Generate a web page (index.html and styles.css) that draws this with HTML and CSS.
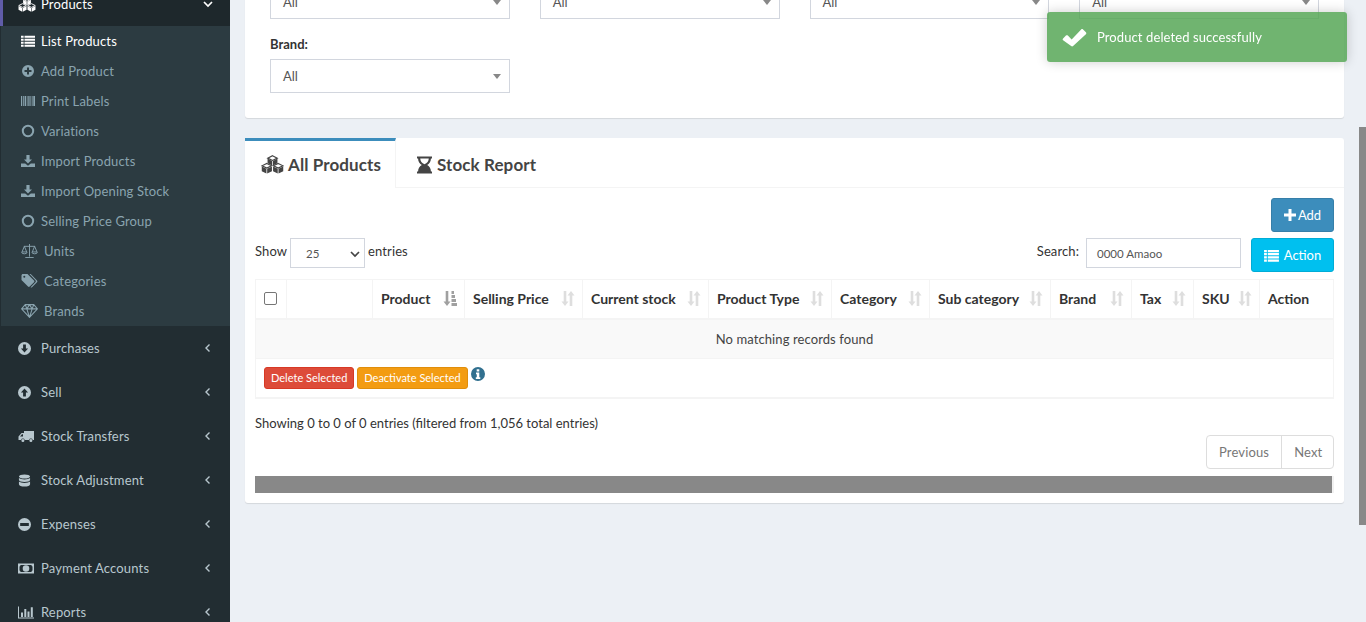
FILE: index.html
```html
<!DOCTYPE html>
<html lang="en">
<head>
    <meta charset="UTF-8">
    <meta name="viewport" content="width=device-width, initial-scale=1.0">
    <title>Products</title>
    <link rel="stylesheet" href="styles.css">
</head>
<body>
    <svg class="sprite" width="0" height="0">
        <symbol id="i-cubes" viewBox="0 0 24 20">
            <path d="M6.800 3.800L11.600 6.200V11L6.800 8.700zM17.200 3.800L12.400 6.200V11l4.800-2.300zM.7 12.100L5.600 14.500v5L.7 17zM11.400 12.100L6.400 14.500v5l5-2.500zM12.600 12.100l4.900 2.400v5L12.600 17zM23.300 12.100L18.300 14.500v5l5-2.500z"/>
            <path fill="none" stroke="currentColor" stroke-width="1.200" d="M12 .8l5 2.500-5 2.400-5-2.400zM6 8.900l5 2.500-5 2.400-5-2.400zM18 8.900l5 2.500-5 2.400-5-2.400z"/>
        </symbol>
        <symbol id="i-list" viewBox="0 0 16 14"><path d="M0 1h3v2.400H0zM4 1h12v2.400H4zM0 4.400h3v2.400H0zM4 4.400h12v2.400H4zM0 7.800h3v2.400H0zM4 7.800h12v2.400H4zM0 11.200h3v2.400H0zM4 11.200h12v2.400H4z"/></symbol>
        <symbol id="i-plus-circle" viewBox="0 0 14 14"><path fill-rule="evenodd" d="M7 1a6 6 0 1 0 0 12A6 6 0 0 0 7 1zM6 3.500h2V6h2.500v2H8v2.500H6V8H3.500V6H6z"/></symbol>
        <symbol id="i-barcode" viewBox="0 0 14 12"><path d="M0 1h1.200v10H0zM2 1h.8v10H2zM3.600 1h1.400v10H3.600zM5.800 1h.7v10h-.7zM7.300 1h1.300v10H7.300zM9.400 1h.7v10h-.7zM10.800 1h.8v10h-.8zM12.300 1H14v10h-1.700z"/></symbol>
        <symbol id="i-circle-o" viewBox="0 0 14 14"><path fill-rule="evenodd" d="M7 .8a6.200 6.200 0 1 0 0 12.400A6.200 6.200 0 0 0 7 .8zm0 2a4.200 4.200 0 1 1 0 8.400 4.200 4.200 0 0 1 0-8.400z"/></symbol>
        <symbol id="i-download" viewBox="0 0 14 14"><path d="M5.400 1h3.200v4.600H11L7 9.400 3 5.600h2.400zM0 9.400h4.200L7 11.800l2.800-2.400H14V13H0z"/></symbol>
        <symbol id="i-scale" viewBox="0 0 18 15"><path fill="none" stroke="currentColor" stroke-width="1" d="M9 0v13.500M4.500 14.500h9M3 2.500h12M3.500 2.500L1 8.500h5zM14.500 2.500L12 8.500h5zM.5 8.500a3 2 0 0 0 6 0M11.500 8.500a3 2 0 0 0 6 0"/></symbol>
        <symbol id="i-tags" viewBox="0 0 16 14"><path fill-rule="evenodd" d="M0 1.500C0 .7.700 0 1.500 0H6l6.500 6.500c.5.500.5 1.200 0 1.700L8.200 12.500c-.5.500-1.200.5-1.700 0L0 6zM2.800 1.800a1 1 0 1 0 0 2 1 1 0 0 0 0-2z"/><path d="M8 0h1.200l6.300 6.500c.5.500.5 1.200 0 1.700l-5 5c-.4.400-1 .4-1.400 0l5-5.300c.4-.4.400-1 0-1.400z"/></symbol>
        <symbol id="i-gem" viewBox="0 0 16 13"><path fill="none" stroke="currentColor" stroke-width="1" d="M4 .5h8l3.500 4L8 12.500.5 4.500zM.5 4.500h15M4 .5l1.500 4L8 12.500l2.500-8L12 .5M5.500 4.500L8 .5l2.500 4"/></symbol>
        <symbol id="i-arrow-down" viewBox="1 1 12 12"><path fill-rule="evenodd" d="M7 1a6 6 0 1 0 0 12A6 6 0 0 0 7 1zM5.700 3.200h2.600V7H10.300L7 10.800 3.700 7h2z"/></symbol>
        <symbol id="i-arrow-up" viewBox="1 1 12 12"><path fill-rule="evenodd" d="M7 1a6 6 0 1 0 0 12A6 6 0 0 0 7 1zM7 3.200L10.300 7H8.300v3.800H5.700V7h-2z"/></symbol>
        <symbol id="i-truck" viewBox="0 0 16 13"><path fill-rule="evenodd" d="M6 1h10v9h-1.200a2 2 0 0 0-3.800 0H6.800a2 2 0 0 0-3.800 0H.5V6.500L3.500 3H6zM4 4.200L2 6.500h3V4.200zM4.900 9a1.400 1.400 0 1 1 0 3 1.400 1.400 0 0 1 0-3zM12.900 9a1.400 1.400 0 1 1 0 3 1.400 1.400 0 0 1 0-3z"/></symbol>
        <symbol id="i-database" viewBox="0 0 12 14"><path d="M6 .5c3.300 0 6 .9 6 2.200S9.300 4.900 6 4.900 0 4 0 2.700 2.700.5 6 .5zM0 4.400c1 1 3.300 1.500 6 1.500s5-.5 6-1.500v2c0 1.200-2.700 2.100-6 2.100S0 7.600 0 6.400zM0 8.100c1 1 3.300 1.500 6 1.500s5-.5 6-1.500v2.900c0 1.400-2.700 2.500-6 2.500S0 12.400 0 11z"/></symbol>
        <symbol id="i-minus-circle" viewBox="1 1 12 12"><path fill-rule="evenodd" d="M7 1a6 6 0 1 0 0 12A6 6 0 0 0 7 1zM3 5.700h8v2.600H3z"/></symbol>
        <symbol id="i-money" viewBox="0 0 16 11"><path fill-rule="evenodd" d="M0 .5h16v10H0zM2.500 2A1.500 1.500 0 0 1 1.500 3.500v4a1.500 1.500 0 0 1 1 1.500h11a1.500 1.500 0 0 1 1-1.500v-4a1.500 1.500 0 0 1-1-1.500zM8 2.200a3.300 3.300 0 1 1 0 6.600 3.300 3.300 0 0 1 0-6.600z"/><path d="M7.300 3.700h1.300v3h.6v.7H6.900v-.7h.6V4.500h-.5z"/></symbol>
        <symbol id="i-chart" viewBox="0 0 16 12"><path d="M0 0h1v11h15v1H0zM3 6h2v4.500H3zM6.300 2.500h2v8h-2zM9.500 5h2v5.500h-2zM12.800 .8h2v9.700h-2z"/></symbol>
        <symbol id="i-chevron-down" viewBox="0 0 10 10"><path fill="none" stroke="currentColor" stroke-width="1.700" d="M1 3l4 4 4-4"/></symbol>
        <symbol id="i-chevron-left" viewBox="0 0 10 10"><path fill="none" stroke="currentColor" stroke-width="1.400" d="M6.500 1.500L3 5l3.500 3.500"/></symbol>
        <symbol id="i-hourglass" viewBox="0 0 14 16"><path fill-rule="evenodd" d="M0 0h14v2h-1c0 3-1.600 5-3.500 6C11.400 9 13 11 13 14h1v2H0v-2h1c0-3 1.600-5 3.500-6C2.600 7 1 5 1 2H0zM3 2c0 2.400 1.600 4.300 4 5.200C9.400 6.300 11 4.400 11 2z"/></symbol>
        <symbol id="i-plus" viewBox="0 0 12 12"><path d="M4.500 0h3v4.500H12v3H7.500V12h-3V7.500H0v-3h4.500z"/></symbol>
        <symbol id="i-check" viewBox="0 0 26 20"><path d="M1 11l3-3c.6-.6 1.400-.6 2 0l4 4L20 1.500c.6-.6 1.400-.6 2 0l3 3c.6.600.6 1.400 0 2L11.500 19c-.6.600-1.400.6-2 0L1 13c-.6-.6-.6-1.400 0-2z"/></symbol>
        <symbol id="i-info" viewBox="0 0 14 14"><path fill-rule="evenodd" d="M7 0a7 7 0 1 0 0 14A7 7 0 0 0 7 0zM5.700 2.200h2.600v2.200H5.700zM5 5.500h3.300v4.700h1V12H4.800v-1.800h1V7.300H5z"/></symbol>
        <symbol id="i-sort" viewBox="0 0 14 15"><path d="M2.700 0h2.600v10.500h2.200L4 15 .5 10.500h2.200zM10 0l3.500 4.500h-2.200V15H8.700V4.500H6.500z"/></symbol>
        <symbol id="i-sort-asc" viewBox="0 0 14 15"><path d="M2.700 0h2.600v10.500h2.200L4 15 .5 10.500h2.200zM8.500 0h2.500v3H8.500zM8.500 4h3.500v3H8.500zM8.500 8h4.500v3H8.500zM8.500 12H14v3H8.500z"/></symbol>
    </svg>

    <div class="page">
        <aside class="sidebar">
            <ul class="menu">
                <li class="menu-item open">
                    <svg class="ico ico-cubes"><use href="#i-cubes"/></svg>
                    <span>Products</span>
                    <svg class="chev chev-down"><use href="#i-chevron-down"/></svg>
                </li>
                <li>
                    <ul class="submenu">
                        <li class="sub-item active"><svg class="ico"><use href="#i-list"/></svg><span>List Products</span></li>
                        <li class="sub-item"><svg class="ico"><use href="#i-plus-circle"/></svg><span>Add Product</span></li>
                        <li class="sub-item"><svg class="ico"><use href="#i-barcode"/></svg><span>Print Labels</span></li>
                        <li class="sub-item"><svg class="ico"><use href="#i-circle-o"/></svg><span>Variations</span></li>
                        <li class="sub-item"><svg class="ico"><use href="#i-download"/></svg><span>Import Products</span></li>
                        <li class="sub-item"><svg class="ico"><use href="#i-download"/></svg><span>Import Opening Stock</span></li>
                        <li class="sub-item"><svg class="ico"><use href="#i-circle-o"/></svg><span>Selling Price Group</span></li>
                        <li class="sub-item wide"><svg class="ico"><use href="#i-scale"/></svg><span>Units</span></li>
                        <li class="sub-item wide"><svg class="ico"><use href="#i-tags"/></svg><span>Categories</span></li>
                        <li class="sub-item wide"><svg class="ico"><use href="#i-gem"/></svg><span>Brands</span></li>
                    </ul>
                </li>
                <li class="menu-item"><svg class="ico"><use href="#i-arrow-down"/></svg><span>Purchases</span><svg class="chev"><use href="#i-chevron-left"/></svg></li>
                <li class="menu-item"><svg class="ico"><use href="#i-arrow-up"/></svg><span>Sell</span><svg class="chev"><use href="#i-chevron-left"/></svg></li>
                <li class="menu-item"><svg class="ico ico-wide"><use href="#i-truck"/></svg><span>Stock Transfers</span><svg class="chev"><use href="#i-chevron-left"/></svg></li>
                <li class="menu-item"><svg class="ico"><use href="#i-database"/></svg><span>Stock Adjustment</span><svg class="chev"><use href="#i-chevron-left"/></svg></li>
                <li class="menu-item"><svg class="ico"><use href="#i-minus-circle"/></svg><span>Expenses</span><svg class="chev"><use href="#i-chevron-left"/></svg></li>
                <li class="menu-item"><svg class="ico ico-wide"><use href="#i-money"/></svg><span>Payment Accounts</span><svg class="chev"><use href="#i-chevron-left"/></svg></li>
                <li class="menu-item"><svg class="ico ico-wide"><use href="#i-chart"/></svg><span>Reports</span><svg class="chev"><use href="#i-chevron-left"/></svg></li>
            </ul>
        </aside>

        <main class="content">
            <section class="box filters">
                <div class="filter-grid">
                    <div class="fake-select">All</div>
                    <div class="fake-select">All</div>
                    <div class="fake-select">All</div>
                    <div class="fake-select">All</div>
                    <div class="filter-col">
                        <label class="filter-label">Brand:</label>
                        <div class="fake-select">All</div>
                    </div>
                </div>
            </section>

            <section class="box card">
                <div class="tabs">
                    <div class="tab active"><svg class="tab-ico"><use href="#i-cubes"/></svg>All Products</div>
                    <div class="tab"><svg class="tab-ico hourglass"><use href="#i-hourglass"/></svg>Stock Report</div>
                </div>
                <div class="card-body">
                    <div class="top-actions">
                        <button class="btn btn-add"><svg class="btn-ico"><use href="#i-plus"/></svg>Add</button>
                    </div>
                    <div class="table-tools">
                        <div class="length">
                            Show
                            <div class="mini-select">25<svg class="mini-chev"><use href="#i-chevron-down"/></svg></div>
                            entries
                        </div>
                        <div class="search">
                            Search:
                            <div class="search-input">0000 Amaoo</div>
                            <button class="btn btn-action"><svg class="btn-ico list"><use href="#i-list"/></svg>Action</button>
                        </div>
                    </div>

                    <table class="products">
                        <colgroup>
                            <col class="c1"><col class="c2"><col class="c3"><col class="c4"><col class="c5"><col class="c6">
                            <col class="c7"><col class="c8"><col class="c9"><col class="c10"><col class="c11"><col class="c12">
                        </colgroup>
                        <thead>
                            <tr>
                                <th class="check-cell"><span class="checkbox"></span></th>
                                <th></th>
                                <th><div class="th-in">Product<svg class="sort current"><use href="#i-sort-asc"/></svg></div></th>
                                <th><div class="th-in">Selling Price<svg class="sort"><use href="#i-sort"/></svg></div></th>
                                <th><div class="th-in">Current stock<svg class="sort"><use href="#i-sort"/></svg></div></th>
                                <th><div class="th-in">Product Type<svg class="sort"><use href="#i-sort"/></svg></div></th>
                                <th><div class="th-in">Category<svg class="sort"><use href="#i-sort"/></svg></div></th>
                                <th><div class="th-in">Sub category<svg class="sort"><use href="#i-sort"/></svg></div></th>
                                <th><div class="th-in">Brand<svg class="sort"><use href="#i-sort"/></svg></div></th>
                                <th><div class="th-in">Tax<svg class="sort"><use href="#i-sort"/></svg></div></th>
                                <th><div class="th-in">SKU<svg class="sort"><use href="#i-sort"/></svg></div></th>
                                <th>Action</th>
                            </tr>
                        </thead>
                        <tbody>
                            <tr class="empty-row"><td colspan="12">No matching records found</td></tr>
                        </tbody>
                        <tfoot>
                            <tr>
                                <td colspan="12">
                                    <div class="bulk">
                                        <button class="btn-xs red">Delete Selected</button>
                                        <button class="btn-xs orange">Deactivate Selected</button>
                                        <svg class="info"><use href="#i-info"/></svg>
                                    </div>
                                </td>
                            </tr>
                        </tfoot>
                    </table>

                    <p class="table-info">Showing 0 to 0 of 0 entries (filtered from 1,056 total entries)</p>
                    <div class="pager-row">
                        <div class="pager">
                            <a class="prev">Previous</a>
                            <a>Next</a>
                        </div>
                    </div>
                    <div class="h-scroll"><div class="h-thumb"></div></div>
                </div>
            </section>
        </main>
    </div>

    <div class="toast"><svg class="toast-ico"><use href="#i-check"/></svg>Product deleted successfully</div>
    <div class="v-thumb"></div>
</body>
</html>
```

FILE: styles.css
```css
*{
    box-sizing: border-box;
    margin: 0px;
    padding: 0px;
}
html, body{
    height: 100%;
    overflow: hidden;
}
body{
    background-color: #ecf0f5;
    color: #333;
    font-family: "Lato", "Liberation Sans", sans-serif;
    font-size: 13px;
}
.sprite{
    display: block;
    height: 0;
}
ul{
    list-style: none;
}
svg{
    fill: currentColor;
}

.page{
    display: flex;
    align-items: flex-start;
    height: 100%;
}

/* sidebar, the page is scrolled so it starts above the window */
.sidebar{
    width: 230px;
    flex-shrink: 0;
    height: 100%;
    background-color: #222d32;
    overflow: hidden;
    font-size: 13px;
    letter-spacing: 0.15px;
}
.menu{
    margin-top: -18px;
}
.menu-item{
    display: flex;
    align-items: center;
    height: 44px;
    padding-left: 18px;
    color: #b8c7ce;
}
.menu-item .ico{
    width: 13px;
    height: 13px;
    margin-right: 10px;
}
.menu-item .ico-wide{
    width: 16px;
    height: 13px;
    margin-right: 7px;
}
.menu-item.open{
    background-color: #1e282c;
    border-left: 3px solid #605ca8;
    padding-left: 15px;
    color: #fff;
}
.menu-item.open .ico-cubes{
    width: 18px;
    height: 15px;
    margin-right: 5px;
}
.chev{
    width: 10px;
    height: 10px;
    margin-left: auto;
    margin-right: 17px;
}
.submenu{
    background-color: #2c3b41;
    margin-left: 1px;
}
.sub-item{
    display: flex;
    align-items: center;
    height: 30px;
    padding-left: 20px;
    color: #8aa4af;
}
.sub-item .ico{
    width: 14px;
    height: 14px;
    margin-right: 6px;
}
.sub-item.wide .ico{
    width: 17px;
    margin-right: 6px;
}
.sub-item.active{
    color: #fff;
}

/* main column */
.content{
    flex: 1;
    padding: 0 22px 0 15px;
    min-width: 0;
}
.box{
    background-color: #fff;
    border-radius: 3px;
    box-shadow: 0 1px 1px rgba(0,0,0,0.1);
}
.filters{
    margin-top: -15px;
    padding: 0 25px 25px;
    margin-bottom: 20px;
}
.filter-grid{
    display: grid;
    grid-template-columns: repeat(4, 1fr);
    column-gap: 30px;
    row-gap: 16px;
}
.filter-label{
    display: block;
    font-weight: 700;
    height: 24px;
    line-height: 20px;
    margin-top: -1px;
    margin-bottom: 1px;
}
.fake-select{
    position: relative;
    height: 34px;
    line-height: 32px;
    border: 1px solid #d2d6de;
    padding-left: 12px;
    color: #555;
}
.fake-select::after{
    content: '';
    position: absolute;
    right: 8px;
    top: 14px;
    border-left: 4px solid transparent;
    border-right: 4px solid transparent;
    border-top: 5px solid #888;
}

/* card with tabs */
.tabs{
    display: flex;
    height: 50px;
    border-bottom: 1px solid #f4f4f4;
}
.tab{
    display: flex;
    align-items: center;
    font-size: 17px;
    font-weight: 700;
    letter-spacing: 0.1px;
    color: #444;
    padding: 3px 15px 0 21px;
    height: 50px;
}
.tab.active{
    width: 151px;
    padding-left: 16px;
    border-top: 3px solid #3c8dbc;
    border-right: 1px solid #f4f4f4;
    background-color: #fff;
    padding-top: 0;
    padding-right: 0;
    position: relative;
}
.tab-ico{
    width: 23px;
    height: 19px;
    margin-right: 4px;
}
.tab-ico.hourglass{
    width: 15px;
    height: 18px;
    margin-right: 5px;
}
.card-body{
    padding: 10px;
}
.top-actions{
    display: flex;
    justify-content: flex-end;
    height: 40px;
}
.btn{
    display: inline-flex;
    align-items: center;
    justify-content: center;
    height: 34px;
    border-radius: 3px;
    font-family: inherit;
    font-size: 13px;
    color: #fff;
    cursor: pointer;
}
.btn-add{
    width: 63px;
    background-color: #3c8dbc;
    border: 1px solid #367fa9;
}
.btn-action{
    width: 83px;
    background-color: #00c0ef;
    border: 1px solid #00acd6;
    margin-left: 10px;
}
.btn-ico{
    width: 12px;
    height: 12px;
    margin-right: 2px;
}
.btn-ico.list{
    width: 15px;
    height: 13px;
    margin-right: 5px;
}
.table-tools{
    display: flex;
    justify-content: space-between;
    align-items: flex-start;
    height: 41px;
}
.length, .search{
    display: flex;
    align-items: flex-start;
    line-height: 26px;
    letter-spacing: 0.1px;
}
.mini-select{
    display: flex;
    align-items: center;
    justify-content: space-between;
    width: 75px;
    height: 30px;
    border: 1px solid #d2d6de;
    margin: 0 3px 0 3px;
    padding: 2px 4px 0 15px;
    font-size: 11.5px;
    letter-spacing: 0;
    color: #555;
}
.mini-chev{
    width: 10px;
    height: 10px;
    color: #444;
}
.search-input{
    width: 155px;
    height: 30px;
    border: 1px solid #d2d6de;
    line-height: 30px;
    margin-left: 7px;
    padding-left: 10px;
    font-size: 11.5px;
    letter-spacing: 0;
    color: #555;
}

/* table */
.products{
    width: 100%;
    table-layout: fixed;
    border-collapse: separate;
    border-spacing: 0;
    border: 1px solid #f4f4f4;
    border-bottom-width: 2px;
}
.c1{ width: 31px; }
.c2{ width: 86px; }
.c3{ width: 92px; }
.c4{ width: 118px; }
.c5{ width: 126px; }
.c6{ width: 123px; }
.c7{ width: 98px; }
.c8{ width: 121px; }
.c9{ width: 81px; }
.c10{ width: 62px; }
.c11{ width: 66px; }
.products th{
    height: 40px;
    text-align: left;
    padding: 0 7px 1px 8px;
    color: #333;
    font-size: 14px;
    font-weight: 700;
    border-right: 1px solid #f4f4f4;
    border-bottom: 2px solid #f4f4f4;
}
.products th:last-child{
    border-right: 0;
}
.th-in{
    display: flex;
    align-items: center;
    justify-content: space-between;
    white-space: nowrap;
}
.sort{
    width: 14px;
    height: 15px;
    color: #dedede;
    flex-shrink: 0;
}
.sort.current{
    color: #a0a0a0;
}
.check-cell{
    text-align: center;
}
.checkbox{
    display: block;
    width: 13px;
    height: 13px;
    margin-top: -1px;
    border: 1px solid #767676;
    border-radius: 2px;
    background-color: #fff;
}
.empty-row td{
    height: 38px;
    background-color: #f9f9f9;
    text-align: center;
    color: #444;
    letter-spacing: 0.1px;
}
.products tfoot td{
    height: 39px;
    padding: 8px 8px 0;
    vertical-align: top;
    border-top: 1px solid #f4f4f4;
}
.bulk{
    display: flex;
    align-items: flex-start;
    gap: 3px;
}
.btn-xs{
    height: 22px;
    padding: 0 6px 1px;
    border-radius: 3px;
    font-family: inherit;
    font-size: 11px;
    color: #fff;
}
.red{
    background-color: #dd4b39;
    border: 1px solid #d73925;
}
.orange{
    background-color: #f39c12;
    border: 1px solid #e08e0b;
}
.info{
    width: 14px;
    height: 14px;
    color: #31708f;
}
.table-info{
    margin-top: 15px;
    line-height: 18px;
}
.pager-row{
    display: flex;
    justify-content: flex-end;
    margin-top: 3px;
}
.pager{
    display: flex;
    height: 34px;
    border: 1px solid #ddd;
    border-radius: 4px;
    color: #777;
    line-height: 32px;
    width: 128px;
    letter-spacing: 0.15px;
}
.pager a{
    padding: 0 12px;
}
.pager .prev{
    border-right: 1px solid #ddd;
}
.h-scroll{
    margin-top: 7px;
    height: 17px;
    background-color: #f1f1f1;
}
.h-thumb{
    width: 1077px;
    height: 17px;
    background-color: #888;
}

/* overlays */
.toast{
    position: fixed;
    top: 12px;
    left: 1047px;
    width: 300px;
    height: 50px;
    display: flex;
    align-items: center;
    padding-left: 15px;
    border-radius: 3px;
    background-color: rgba(81,163,81,0.82);
    box-shadow: 0 0 12px rgba(0,0,0,0.2);
    color: #fff;
    letter-spacing: 0.1px;
}
.toast-ico{
    width: 25px;
    height: 19px;
    margin-right: 10px;
}
.v-thumb{
    position: fixed;
    right: 0;
    top: 127px;
    width: 7px;
    height: 398px;
    background-color: #888;
}
```
